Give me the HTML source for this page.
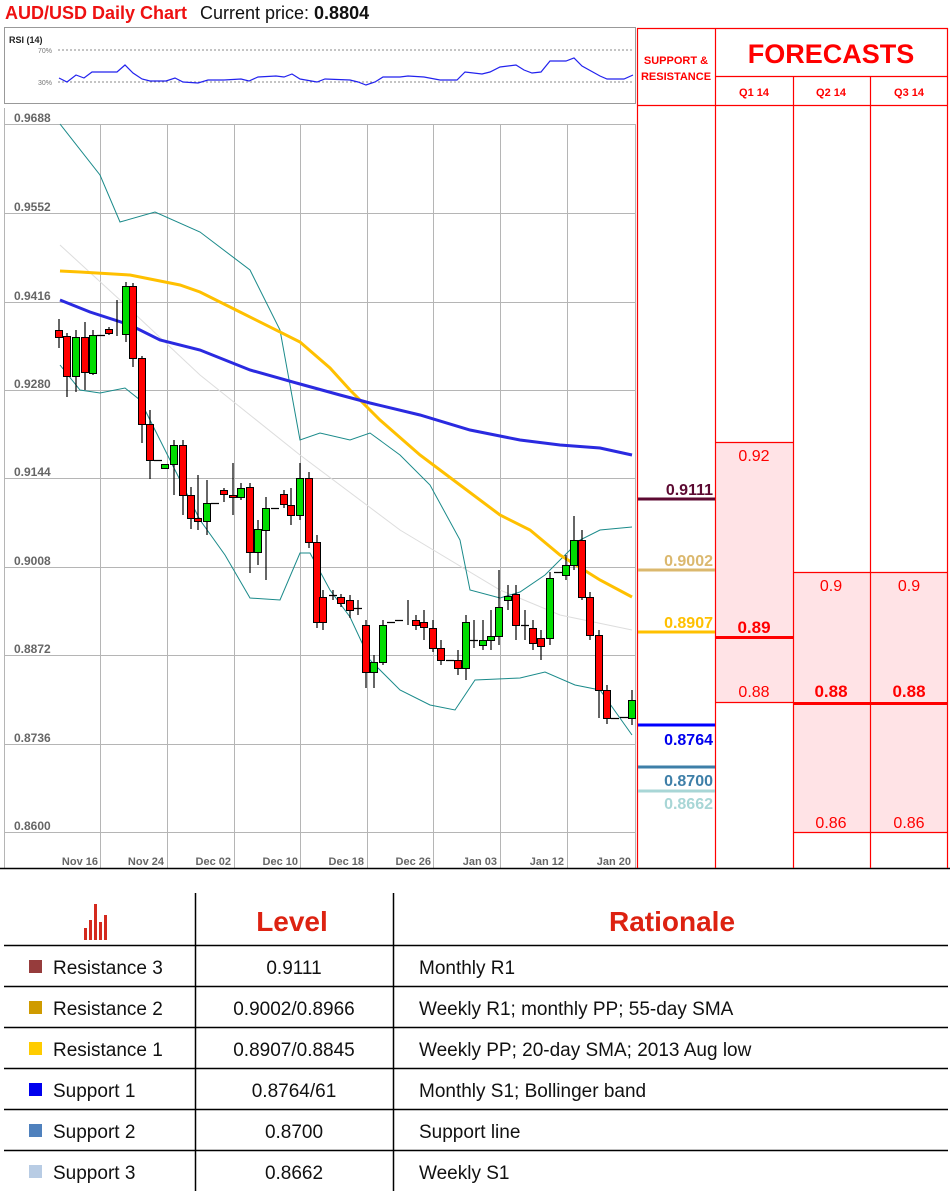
<!DOCTYPE html>
<html><head><meta charset="utf-8"><style>
html,body{margin:0;padding:0;background:#fff;}
svg{display:block;font-family:"Liberation Sans",Arial,sans-serif;}
</style></head><body>
<svg width="952" height="1195" viewBox="0 0 952 1195" xmlns="http://www.w3.org/2000/svg">
<rect width="952" height="1195" fill="#fff"/>
<text x="5" y="19" font-size="18" font-weight="bold" fill="#ee1111">AUD/USD Daily Chart</text>
<text x="200" y="19" font-size="18" fill="#111">Current price: <tspan font-weight="bold">0.8804</tspan></text>

<!-- RSI -->
<rect x="4.5" y="27.5" width="631" height="76" fill="#fff" stroke="#999"/>
<text x="9" y="43" font-size="9" font-weight="bold" fill="#222">RSI (14)</text>
<text x="38" y="53" font-size="7" fill="#777">70%</text>
<text x="38" y="85" font-size="7" fill="#777">30%</text>
<line x1="58" y1="50" x2="634" y2="50" stroke="#888" stroke-dasharray="2,2"/>
<line x1="58" y1="82" x2="634" y2="82" stroke="#888" stroke-dasharray="2,2"/>
<polyline fill="none" stroke="#2222ee" stroke-width="1.2" points="59,78 67,82 76,75 84,78 92,72 117,72 125,65 133,73 142,79 150,81 166,81 175,78 183,82 198,83 208,80 224,80 241,79 249,81 258,77 276,76 284,77 292,74 300,79 317,82 325,79 350,80 358,82 366,85 375,82 383,77 400,77 408,76 424,77 440,80 457,80 465,72 482,74 490,72 500,67 516,65 524,70 532,73 541,72 550,61 566,61 574,58 582,66 600,76 607,79 624,79 633,75"/>

<!-- main chart grid -->
<g stroke="#b5b5b5" stroke-width="1">
<line x1="4" y1="124.5" x2="636" y2="124.5"/><line x1="4" y1="213.5" x2="636" y2="213.5"/>
<line x1="4" y1="302.5" x2="636" y2="302.5"/><line x1="4" y1="390.5" x2="636" y2="390.5"/>
<line x1="4" y1="478.5" x2="636" y2="478.5"/><line x1="4" y1="567.5" x2="636" y2="567.5"/>
<line x1="4" y1="655.5" x2="636" y2="655.5"/><line x1="4" y1="744.5" x2="636" y2="744.5"/>
<line x1="4" y1="832.5" x2="636" y2="832.5"/>
<line x1="100.5" y1="124" x2="100.5" y2="868"/><line x1="167.5" y1="124" x2="167.5" y2="868"/>
<line x1="234.5" y1="124" x2="234.5" y2="868"/><line x1="300.5" y1="124" x2="300.5" y2="868"/>
<line x1="367.5" y1="124" x2="367.5" y2="868"/><line x1="433.5" y1="124" x2="433.5" y2="868"/>
<line x1="500.5" y1="124" x2="500.5" y2="868"/><line x1="567.5" y1="124" x2="567.5" y2="868"/>
<line x1="4.5" y1="108" x2="4.5" y2="868"/><line x1="635.5" y1="124" x2="635.5" y2="868"/>
</g>
<g font-size="12" fill="#666" font-weight="bold">
<text x="14" y="122">0.9688</text><text x="14" y="211">0.9552</text><text x="14" y="300">0.9416</text>
<text x="14" y="388">0.9280</text><text x="14" y="476">0.9144</text><text x="14" y="565">0.9008</text>
<text x="14" y="653">0.8872</text><text x="14" y="742">0.8736</text><text x="14" y="830">0.8600</text>
</g>
<g font-size="11" fill="#666" font-weight="bold" text-anchor="end">
<text x="98" y="865">Nov 16</text><text x="164" y="865">Nov 24</text><text x="231" y="865">Dec 02</text>
<text x="298" y="865">Dec 10</text><text x="364" y="865">Dec 18</text><text x="431" y="865">Dec 26</text>
<text x="497" y="865">Jan 03</text><text x="564" y="865">Jan 12</text><text x="631" y="865">Jan 20</text>
</g>
<line x1="0" y1="868.5" x2="950" y2="868.5" stroke="#000" stroke-width="1.5"/>

<!-- indicators -->
<polyline fill="none" stroke="#ddd" stroke-width="1" points="60,245 120,300 200,375 300,455 400,530 500,590 560,615 632,630"/>
<polyline fill="none" stroke="#1a8a8a" stroke-width="1" points="60,124 100,175 120,222 155,212 200,232 250,270 280,330 300,440 320,433 350,440 370,433 400,455 430,485 460,540 470,590 500,598 520,592 545,575 580,540 600,530 632,527"/>
<polyline fill="none" stroke="#1a8a8a" stroke-width="1" points="60,365 80,390 100,393 125,388 140,400 175,470 200,520 225,555 250,598 280,600 300,553 310,553 330,590 350,617 370,660 400,690 430,705 455,710 475,680 520,678 545,672 575,685 600,690 632,735"/>
<polyline fill="none" stroke="#ffc000" stroke-width="3" points="60,271 80,272 130,275 180,285 200,292 240,312 300,342 330,368 350,390 380,420 420,455 460,485 500,515 530,530 560,555 600,580 632,597"/>
<polyline fill="none" stroke="#2a2ae0" stroke-width="3" points="60,300 90,312 130,325 160,340 200,350 250,370 300,384 340,395 370,403 420,415 470,430 520,440 560,445 600,448 632,455"/>

<!-- wicks -->
<path fill="none" stroke="#000" stroke-width="1.2" d="M59 319V348M67 333V397M76 330V392M85 322V390M93 330V375M109 327V335M117 300V336M126 282V342M133 283V367M142 356V443M150 410V479M174 440V495M183 440V515M191 487V529M198 475V530M207 480V535M224 488V502M233 463V515M241 483V500M250 483V573M258 520V565M266 497V580M284 490V508M291 488V525M300 463V520M309 472V548M317 535V628M323 590V630M333 590V600M341 594V607M350 595V618M358 600V615M366 620V688M374 655V688M383 620V665M408 600V625M416 615V630M424 610V640M433 620V652M441 640V665M458 650V675M466 615V680M474 620V648M483 620V650M491 610V650M499 570V645M508 585V610M516 585V640M525 610V640M533 620V650M541 630V660M550 572V645M566 555V580M574 516V570M582 530V600M590 592V640M599 630V718M607 685V724M632 690V725
M97 335.5H105M154 460.5H162M211 503.5H219M271 508.5H279M329 595.5H337M354 608.5H362M387 622.5H395M395 620.5H403M446 660.5H454M470 640.5H478M521 625.5H529M554 572.5H562M611 718.5H619M620 717.5H628"/>
<!-- red bodies -->
<g fill="#ff0000" stroke="#000" stroke-width="1">
<rect x="55.5" y="330.5" width="7" height="7"/><rect x="63.5" y="336.5" width="7" height="40"/>
<rect x="81.5" y="337.5" width="7" height="35"/><rect x="105.5" y="329.5" width="7" height="4"/>
<rect x="129.5" y="286.5" width="7" height="72"/><rect x="138.5" y="358.5" width="7" height="66"/>
<rect x="146.5" y="424.5" width="7" height="36"/><rect x="179.5" y="445.5" width="7" height="50"/>
<rect x="187.5" y="495.5" width="7" height="23"/><rect x="194.5" y="518.5" width="7" height="3"/>
<rect x="220.5" y="490.5" width="7" height="4"/><rect x="229.5" y="495.5" width="7" height="2"/>
<rect x="246.5" y="487.5" width="7" height="65"/><rect x="280.5" y="494.5" width="7" height="10"/>
<rect x="287.5" y="505.5" width="7" height="10"/><rect x="305.5" y="478.5" width="7" height="64"/>
<rect x="313.5" y="542.5" width="7" height="80"/><rect x="319.5" y="597.5" width="7" height="25"/>
<rect x="337.5" y="597.5" width="7" height="6"/><rect x="346.5" y="600.5" width="7" height="10"/>
<rect x="362.5" y="625.5" width="7" height="47"/><rect x="412.5" y="620.5" width="7" height="5"/>
<rect x="420.5" y="622.5" width="7" height="5"/><rect x="429.5" y="628.5" width="7" height="20"/>
<rect x="437.5" y="648.5" width="7" height="12"/><rect x="454.5" y="660.5" width="7" height="8"/>
<rect x="512.5" y="594.5" width="7" height="31"/><rect x="529.5" y="628.5" width="7" height="15"/>
<rect x="537.5" y="638.5" width="7" height="8"/><rect x="578.5" y="540.5" width="7" height="57"/>
<rect x="586.5" y="597.5" width="7" height="38"/><rect x="595.5" y="635.5" width="7" height="55"/>
<rect x="603.5" y="690.5" width="7" height="28"/>
</g>
<!-- green bodies -->
<g fill="#00dd00" stroke="#000" stroke-width="1">
<rect x="72.5" y="337.5" width="7" height="39"/><rect x="89.5" y="335.5" width="7" height="38"/>
<rect x="122.5" y="286.5" width="7" height="48"/><rect x="161.5" y="464.5" width="7" height="4"/>
<rect x="170.5" y="445.5" width="7" height="19"/><rect x="203.5" y="503.5" width="7" height="18"/>
<rect x="237.5" y="488.5" width="7" height="9"/><rect x="254.5" y="529.5" width="7" height="23"/>
<rect x="262.5" y="508.5" width="7" height="22"/><rect x="296.5" y="478.5" width="7" height="37"/>
<rect x="370.5" y="662.5" width="7" height="10"/><rect x="379.5" y="625.5" width="7" height="37"/>
<rect x="462.5" y="622.5" width="7" height="46"/><rect x="479.5" y="640.5" width="7" height="5"/>
<rect x="487.5" y="636.5" width="7" height="4"/><rect x="495.5" y="607.5" width="7" height="29"/>
<rect x="504.5" y="596.5" width="7" height="4"/><rect x="546.5" y="578.5" width="7" height="60"/>
<rect x="562.5" y="565.5" width="7" height="10"/><rect x="570.5" y="540.5" width="7" height="25"/>
<rect x="628.5" y="700.5" width="7" height="18"/>
</g>

<!-- forecast panel -->
<rect x="715" y="442" width="78" height="260" fill="#ffe3e6"/>
<rect x="793" y="572" width="155" height="260" fill="#ffe3e6"/>
<g stroke="#ff0000" stroke-width="1.2" fill="none">
<line x1="637.5" y1="28" x2="637.5" y2="868"/><line x1="715.5" y1="28" x2="715.5" y2="868"/>
<line x1="793.5" y1="76" x2="793.5" y2="868"/><line x1="870.5" y1="76" x2="870.5" y2="868"/>
<line x1="947.5" y1="28" x2="947.5" y2="868"/>
<line x1="637" y1="28.5" x2="948" y2="28.5"/><line x1="715" y1="76.5" x2="948" y2="76.5"/>
<line x1="637" y1="105.5" x2="948" y2="105.5"/>
<line x1="715" y1="442.5" x2="793" y2="442.5"/><line x1="715" y1="702.5" x2="793" y2="702.5"/>
<line x1="793" y1="572.5" x2="948" y2="572.5"/><line x1="793" y1="832.5" x2="948" y2="832.5"/>
</g>
<line x1="715" y1="637.5" x2="793" y2="637.5" stroke="#ff0000" stroke-width="3"/>
<line x1="793" y1="703.5" x2="948" y2="703.5" stroke="#ff0000" stroke-width="3"/>
<g fill="#ff0000" font-weight="bold" text-anchor="middle">
<text x="676" y="64" font-size="11">SUPPORT &amp;</text>
<text x="676" y="80" font-size="11">RESISTANCE</text>
<text x="831" y="63" font-size="27">FORECASTS</text>
<text x="754" y="96" font-size="11">Q1 14</text><text x="831" y="96" font-size="11">Q2 14</text><text x="909" y="96" font-size="11">Q3 14</text>
</g>
<g fill="#ff0000" font-size="16" text-anchor="middle">
<text x="754" y="461">0.92</text><text x="754" y="697">0.88</text>
<text x="831" y="591">0.9</text><text x="909" y="591">0.9</text>
<text x="831" y="828">0.86</text><text x="909" y="828">0.86</text>
<text x="754" y="633" font-weight="bold" font-size="17">0.89</text>
<text x="831" y="697" font-weight="bold" font-size="17">0.88</text>
<text x="909" y="697" font-weight="bold" font-size="17">0.88</text>
</g>
<!-- S/R lines -->
<line x1="638" y1="499" x2="715" y2="499" stroke="#5c0a32" stroke-width="3"/>
<line x1="638" y1="570" x2="715" y2="570" stroke="#dbb86e" stroke-width="3"/>
<line x1="638" y1="632" x2="715" y2="632" stroke="#ffc000" stroke-width="3"/>
<line x1="638" y1="725" x2="715" y2="725" stroke="#0000ff" stroke-width="3"/>
<line x1="638" y1="767" x2="715" y2="767" stroke="#3e7fa8" stroke-width="3"/>
<line x1="638" y1="791" x2="715" y2="791" stroke="#a8d6d6" stroke-width="3"/>
<g font-size="16" font-weight="bold" text-anchor="end">
<text x="713" y="495" fill="#5c0a32">0.9111</text>
<text x="713" y="566" fill="#dbb86e">0.9002</text>
<text x="713" y="628" fill="#ffc000">0.8907</text>
<text x="713" y="745" fill="#0000ee">0.8764</text>
<text x="713" y="786" fill="#3e7fa8">0.8700</text>
<text x="713" y="809" fill="#a8d6d6">0.8662</text>
</g>

<!-- table -->
<g fill="#d42a1e">
<rect x="84" y="928" width="3" height="12"/><rect x="89" y="920" width="3" height="20"/>
<rect x="94" y="904" width="3" height="36"/><rect x="99" y="922" width="3" height="18"/>
<rect x="104" y="915" width="3" height="25"/>
</g>
<g fill="#dd2211" font-weight="bold" font-size="28" text-anchor="middle">
<text x="292" y="931">Level</text><text x="672" y="931">Rationale</text>
</g>
<g stroke="#000" stroke-width="1.5">
<line x1="195.5" y1="893" x2="195.5" y2="1191"/><line x1="393.5" y1="893" x2="393.5" y2="1191"/>
<line x1="4" y1="945.5" x2="948" y2="945.5"/><line x1="4" y1="986.5" x2="948" y2="986.5"/>
<line x1="4" y1="1027.5" x2="948" y2="1027.5"/><line x1="4" y1="1068.5" x2="948" y2="1068.5"/>
<line x1="4" y1="1109.5" x2="948" y2="1109.5"/><line x1="4" y1="1150.5" x2="948" y2="1150.5"/>
</g>
<rect x="29" y="960" width="13" height="13" fill="#963c3c"/>
<rect x="29" y="1001" width="13" height="13" fill="#cf9b00"/>
<rect x="29" y="1042" width="13" height="13" fill="#ffcc00"/>
<rect x="29" y="1083" width="13" height="13" fill="#0000ee"/>
<rect x="29" y="1124" width="13" height="13" fill="#4f81bd"/>
<rect x="29" y="1165" width="13" height="13" fill="#b8cce4"/>
<g font-size="19" fill="#111">
<text x="53" y="974">Resistance 3</text><text x="53" y="1015">Resistance 2</text><text x="53" y="1056">Resistance 1</text>
<text x="53" y="1097">Support 1</text><text x="53" y="1138">Support 2</text><text x="53" y="1179">Support 3</text>
<text x="294" y="974" text-anchor="middle">0.9111</text><text x="294" y="1015" text-anchor="middle">0.9002/0.8966</text>
<text x="294" y="1056" text-anchor="middle">0.8907/0.8845</text><text x="294" y="1097" text-anchor="middle">0.8764/61</text>
<text x="294" y="1138" text-anchor="middle">0.8700</text><text x="294" y="1179" text-anchor="middle">0.8662</text>
<text x="419" y="974">Monthly R1</text><text x="419" y="1015">Weekly R1; monthly PP; 55-day SMA</text>
<text x="419" y="1056">Weekly PP; 20-day SMA; 2013 Aug low</text><text x="419" y="1097">Monthly S1; Bollinger band</text>
<text x="419" y="1138">Support line</text><text x="419" y="1179">Weekly S1</text>
</g>
</svg>
</body></html>
